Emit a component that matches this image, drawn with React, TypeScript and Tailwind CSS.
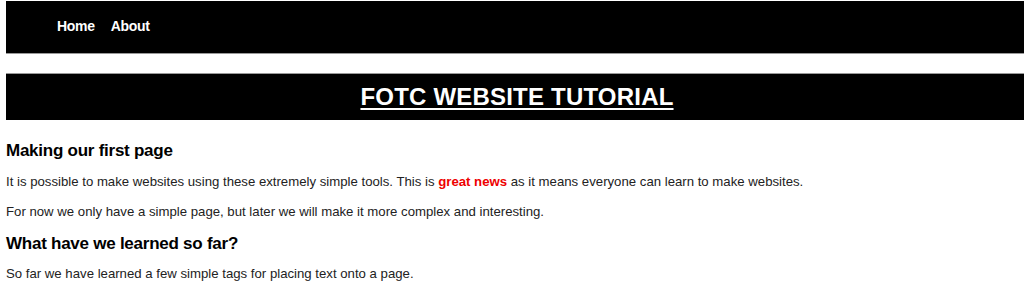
import React from 'react';

const App: React.FC = () => {
    return (
        <div className="bg-white pl-[6px] pt-[1px] font-['Liberation_Sans',Arial,sans-serif]" style={{ minHeight: 290 }}>
            <nav className="h-[53px] bg-black border-b border-[#999] flex items-center pl-[51px] gap-[16px] pb-[1px]">
                <a className="text-white font-bold text-[14px] tracking-[-0.3px]">Home</a>
                <a className="text-white font-bold text-[14px] tracking-[-0.3px]">About</a>
            </nav>
            <header className="mt-[19px] h-[47px] bg-black border-t border-[#999] flex items-center justify-center">
                <h1 className="text-white font-bold text-[24px] tracking-[0.2px] underline underline-offset-[3px] decoration-2 pl-[4px]">FOTC WEBSITE TUTORIAL</h1>
            </header>
            <main className="text-[#222]">
                <h2 className="font-bold text-[17px] tracking-[-0.25px] mt-[21px] leading-[20px] text-black">Making our first page</h2>
                <p className="text-[13.2px] mt-[13px] leading-[16px]">
                    It is possible to make websites using these extremely simple tools. This is{' '}
                    <span className="text-[#e00] font-bold">great news</span> as it means everyone can learn to make websites.
                </p>
                <p className="text-[13.2px] mt-[14px] leading-[16px]">
                    For now we only have a simple page, but later we will make it more complex and interesting.
                </p>
                <h2 className="font-bold text-[17px] tracking-[-0.25px] mt-[14px] leading-[20px] text-black">What have we learned so far?</h2>
                <p className="text-[13.2px] mt-[12px] leading-[16px]">
                    So far we have learned a few simple tags for placing text onto a page.
                </p>
            </main>
        </div>
    );
};

export default App;
